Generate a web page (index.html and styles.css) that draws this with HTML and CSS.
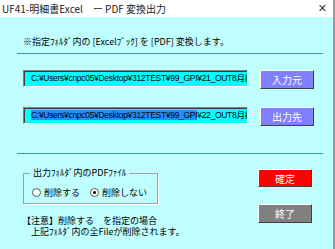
FILE: index.html
```html
<!DOCTYPE html>
<html lang="ja">

<head>
    <meta charset="UTF-8">
    <title>UF41-明細書Excel ー PDF 変換出力</title>
    <link rel="stylesheet" href="styles.css">
</head>

<body>
    <div class="window">
        <div class="titlebar">
            <span class="title">UF41-明細書Excel　ー PDF 変換出力</span>
            <span class="close">&#x2715;</span>
        </div>

        <div class="client">
            <p class="intro">※指定ﾌｫﾙﾀﾞ内の [Excelﾌﾞｯｸ] を [PDF] 変換します。</p>
            <div class="rule"></div>

            <!-- folder pickers -->
            <div class="paths">
                <div class="path-row">
                    <div class="pathbox">C:¥Users¥cnpc05¥Desktop¥312TEST¥99_GPI¥21_OUT8月綜</div>
                    <button class="btn btn-blue">入力元</button>
                </div>
                <div class="path-row">
                    <div class="pathbox"><span class="sel">C:¥Users¥cnpc05¥Desktop¥312TEST¥99_GPI</span>¥22_OUT8月綜</div>
                    <button class="btn btn-blue">出力先</button>
                </div>
            </div>

            <div class="rule"></div>

            <div class="bottom">
                <div class="left">
                    <div class="group">
                        <span class="legend">出力ﾌｫﾙﾀﾞ内のPDFﾌｧｲﾙ</span>
                        <label class="radio"><span class="dot"></span>削除する</label>
                        <label class="radio"><span class="dot on"></span>削除しない</label>
                    </div>
                    <p class="note">【注意】削除する　を指定の場合</p>
                    <p class="note note-2">　上記ﾌｫﾙﾀﾞ内の全Fileが削除されます。</p>
                </div>
                <div class="right">
                    <button class="btn btn-red">確定</button>
                    <button class="btn btn-gray">終了</button>
                </div>
            </div>
        </div>
    </div>
</body>

</html>
```

FILE: styles.css
```css
/* Reset */
body, p {
    margin: 0;
    padding: 0;
}

body {
    font-family: 'Noto Sans CJK JP', 'DejaVu Sans', sans-serif;
    font-size: 9px;
    color: #000;
    background-color: #fff;
}

.window {
    width: 335px;
    height: 249px;
    display: flex;
    flex-direction: column;
    box-sizing: border-box;
    border-right: 2px solid #9a9a9a;
}

/* Title bar */
.titlebar {
    height: 17px;
    display: flex;
    align-items: center;
    justify-content: space-between;
    padding: 0 6px 0 2px;
    background-color: #fff;
}

.title {
    font-size: 10px;
    line-height: 12px;
    color: #222;
}

.close {
    font-family: 'DejaVu Sans', sans-serif;
    font-size: 11px;
    line-height: 12px;
    color: #333;
}

/* Window body */
.client {
    flex: 1;
    background-color: #c0ffff;
    padding: 0 10px 0 17px;
}

.intro {
    font-size: 9px;
    line-height: 12px;
    padding-left: 6px;
    margin-top: 19px;
}

.rule {
    height: 1px;
    background-color: #3f8fc0;
    margin-top: 5px;
}

.paths {
    display: flex;
    flex-direction: column;
    gap: 18px;
    padding: 16px 0 22px 6px;
}

.path-row {
    display: flex;
    align-items: flex-start;
    gap: 12px;
}

.pathbox {
    width: 225px;
    height: 17px;
    box-sizing: border-box;
    background-color: #00ffff;
    border: 1px solid #fff;
    border-top-color: #808080;
    border-left-color: #808080;
    box-shadow: inset 1px 1px 0 #404040;
    font-family: 'Liberation Sans', 'Noto Sans CJK JP', sans-serif;
    font-size: 8.5px;
    line-height: 15px;
    padding-left: 7px;
    white-space: nowrap;
    overflow: hidden;
    letter-spacing: -0.3px;
}

.sel {
    background-color: #1e90ff;
}

/* Buttons */
.btn {
    width: 54px;
    height: 19px;
    padding: 0;
    font-family: 'Noto Sans CJK JP', sans-serif;
    font-size: 10px;
    line-height: 15px;
    color: #fff;
    border: 1px solid;
    border-color: #fff #404040 #404040 #fff;
}

.btn-blue {
    background-color: #8080ff;
}

.btn-red {
    background-color: #ff0000;
    height: 18px;
}

.btn-gray {
    background-color: #808080;
}

/* Bottom area */
.bottom {
    display: flex;
    justify-content: space-between;
    padding-right: 11px;
}

.left {
    display: flex;
    flex-direction: column;
    padding-left: 6px;
}

.group {
    position: relative;
    width: 135px;
    height: 31px;
    box-sizing: border-box;
    margin-top: 19px;
    padding: 8px 0 0 8px;
    border: 1px solid #a0a0a0;
    box-shadow: 1px 1px 0 #fff;
    display: flex;
    white-space: nowrap;
}

/* caption sits on top of the frame line */
.legend {
    position: absolute;
    top: -7px;
    left: 6px;
    padding: 0 3px;
    background-color: #c0ffff;
    font-size: 9px;
    line-height: 12px;
}

.radio {
    display: inline-flex;
    align-items: center;
    gap: 3px;
    margin-right: 10px;
    font-size: 9px;
    line-height: 12px;
}

.dot {
    width: 7px;
    height: 7px;
    border: 1px solid #555;
    border-radius: 50%;
    background-color: #fff;
    position: relative;
}

.dot.on::after {
    content: "";
    position: absolute;
    left: 2px;
    top: 2px;
    width: 3px;
    height: 3px;
    border-radius: 50%;
    background-color: #000;
}

.note {
    font-size: 9px;
    line-height: 12px;
    margin-top: 11px;
    margin-left: -1px;
    white-space: nowrap;
}

.note-2 {
    margin-top: -1px;
}

.right {
    display: flex;
    flex-direction: column;
    gap: 17px;
    padding-top: 15px;
}
```
